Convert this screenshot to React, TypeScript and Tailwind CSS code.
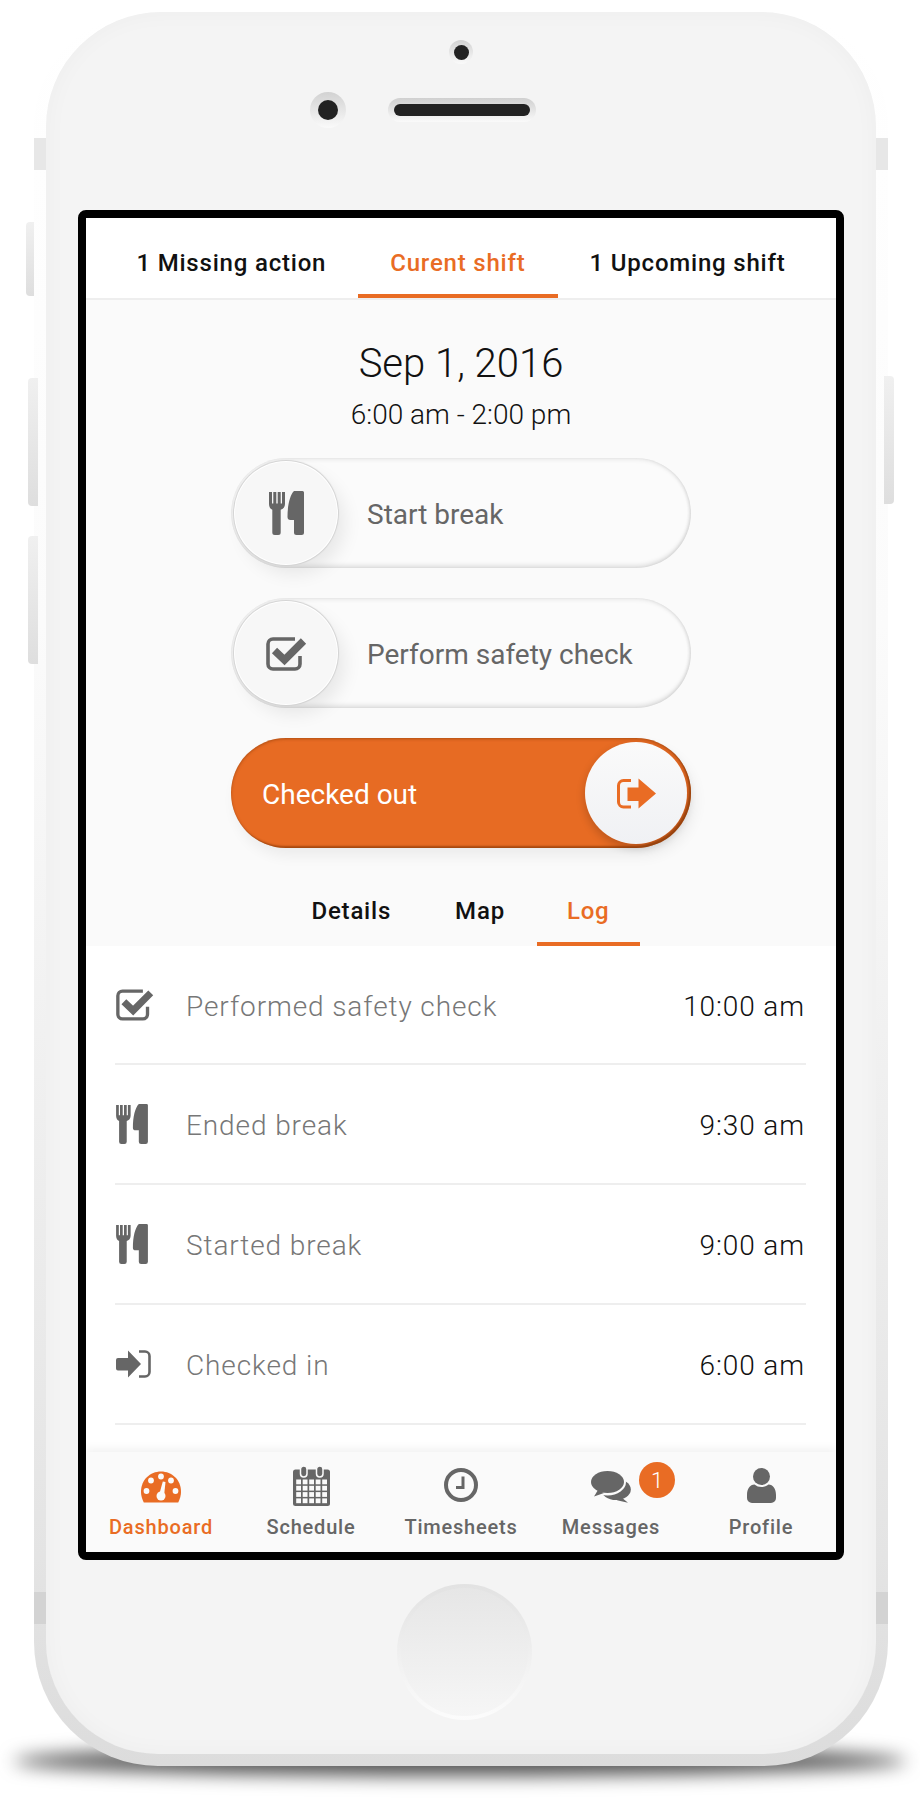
import type { ReactNode } from "react";

function CutleryIcon({ className }: { className?: string }) {
  return (
    <svg viewBox="0 0 35 44" className={className} fill="currentColor">
      <path d="M0 1h3v11.500h1.300V1h3v11.500h1.400V1h3v11.500H13V1h3v12c0 3-1.800 5-4.300 5.800V41.500a2.500 2.500 0 0 1-2.500 2.500H5.800a2.500 2.500 0 0 1-2.500-2.500V18.800C1.400 18 0 16 0 13z" />
      <path d="M33.500 0A1.500 1.500 0 0 1 35 1.500v40a2.500 2.500 0 0 1-2.500 2.500h-5a2.500 2.500 0 0 1-2.500-2.500V29h-3.500a3 3 0 0 1-3-3c0-12 2.500-22 6.500-26z" />
    </svg>
  );
}

function CheckIcon({ className }: { className?: string }) {
  return (
    <svg viewBox="0 0 41 35" className={className} fill="none" stroke="currentColor">
      <path d="M29 3H7a5 5 0 0 0-5 5v20a5 5 0 0 0 5 5h22a5 5 0 0 0 5-5v-8" strokeWidth="3.600" />
      <path d="M8.500 14.500l10 9.500L37.500 5" strokeWidth="7.500" />
    </svg>
  );
}

function SignOutIcon({ className }: { className?: string }) {
  return (
    <svg viewBox="0 0 39 31" className={className} fill="currentColor">
      <path d="M14 2.500H6.500a5 5 0 0 0-5 5V24a5 5 0 0 0 5 5H14" fill="none" stroke="currentColor" strokeWidth="3" />
      <path d="M21.500 0.500L39 15.500 21.500 30.500V23H10.500V9.500h11z" />
    </svg>
  );
}

function SignInIcon({ className }: { className?: string }) {
  return (
    <svg viewBox="0 0 35 28" className={className} fill="currentColor">
      <path d="M12 0.500L25 14 12 27.500V20.500H2a2 2 0 0 1-2-2V10a2 2 0 0 1 2-2h10z" />
      <path d="M23 1.500h6a4.500 4.500 0 0 1 4.500 4.500v16a4.500 4.500 0 0 1-4.500 4.500h-6" fill="none" stroke="currentColor" strokeWidth="2.600" />
    </svg>
  );
}

function GaugeIcon({ className }: { className?: string }) {
  return (
    <svg viewBox="0 0 40 32" className={className}>
      <path d="M2.800 31.500C1 28 0 24.500 0 20.500 0 9 9 .5 20 .5s20 8.500 20 20c0 4-1 7.500-2.800 11z" fill="#e96c24" />
      <g fill="#fafafa">
        <circle cx="10" cy="9.500" r="2.900" />
        <circle cx="20" cy="5.500" r="2.900" />
        <circle cx="30" cy="9.500" r="2.900" />
        <circle cx="5.500" cy="20" r="2.900" />
        <circle cx="34.500" cy="20" r="2.900" />
        <circle cx="20" cy="25" r="4.500" />
        <path d="M21.800 10.500l2.700.6-1.500 14-5-.8z" />
      </g>
    </svg>
  );
}

function CalendarIcon({ className }: { className?: string }) {
  const cols = [3.2, 9.7, 16.2, 22.7, 29.2];
  const rows = [13.5, 19.8, 26.1, 32.4];
  return (
    <svg viewBox="0 0 37 40" className={className}>
      <rect x="0" y="3.500" width="37" height="36.500" rx="2.500" fill="currentColor" />
      <rect x="7.500" y="0" width="6.500" height="11" rx="3.200" fill="currentColor" stroke="#fafafa" strokeWidth="1.500" />
      <rect x="23.500" y="0" width="6.500" height="11" rx="3.200" fill="currentColor" stroke="#fafafa" strokeWidth="1.500" />
      {rows.map((y) =>
        cols.map((x) => <rect key={`${x}-${y}`} x={x} y={y} width="4.800" height="4.800" fill="#fafafa" />)
      )}
    </svg>
  );
}

function ClockIcon({ className }: { className?: string }) {
  return (
    <svg viewBox="0 0 34 34" className={className} fill="none" stroke="currentColor">
      <circle cx="17" cy="17" r="15" strokeWidth="4" />
      <path d="M19 8.500V19.500H12" strokeWidth="3" />
    </svg>
  );
}

function CommentsIcon({ className }: { className?: string }) {
  return (
    <svg viewBox="0 0 40 32" className={className} fill="currentColor">
      <ellipse cx="25" cy="18.500" rx="14.800" ry="10.500" />
      <path d="M30 26l7 5.800-11-2.500z" />
      <ellipse cx="16.500" cy="11" rx="18.500" ry="13.500" fill="#fafafa" />
      <ellipse cx="16.500" cy="11" rx="16.500" ry="11" />
      <path d="M7 19L3 25.500l10-3.500z" />
    </svg>
  );
}

function ProfileIcon({ className }: { className?: string }) {
  return (
    <svg viewBox="0 0 29 35" className={className} fill="currentColor">
      <circle cx="14.500" cy="8.500" r="8.500" />
      <path d="M0 27C0 21 3 16.500 7.500 16.500c2 1.700 4.300 2.500 7 2.500s5-.8 7-2.500C26 16.500 29 21 29 27v3a5 5 0 0 1-5 5H5a5 5 0 0 1-5-5z" />
    </svg>
  );
}

function Tab({ label, active, className }: { label: string; active?: boolean; className?: string }) {
  return (
    <div
      className={`flex items-center border-b-4 text-[24px] font-medium tracking-[0.8px] ${className} ${
        active ? "border-[#e96c24] text-[#e96c24]" : "border-transparent text-[#111]"
      }`}
    >
      {label}
    </div>
  );
}

function ActionPill({ label, children }: { label: string; children: ReactNode }) {
  return (
    <div className="flex items-center h-[110px] w-[460px] rounded-full bg-[#fbfbfb] shadow-[inset_0_2px_4px_rgba(0,0,0,0.07),inset_0_-3px_4px_rgba(0,0,0,0.1),inset_-2px_0_3px_rgba(0,0,0,0.05)]">
      <div className="flex items-center justify-center ml-[4px] h-[102px] w-[102px] rounded-full bg-[#f7f7f7] text-[#666] shadow-[0_0_0_1px_#ffffff,0_0_1px_2px_#d2d2d2,8px_10px_18px_rgba(0,0,0,0.08)]">
        {children}
      </div>
      <span className="ml-[30px] pt-[3px] text-[28px] text-[#666]">{label}</span>
    </div>
  );
}

const logRows = [
  { label: "Performed safety check", time: "10:00 am", icon: <CheckIcon className="w-[38px] h-[33px]" /> },
  { label: "Ended break", time: "9:30 am", icon: <CutleryIcon className="w-[32px] h-[40px]" /> },
  { label: "Started break", time: "9:00 am", icon: <CutleryIcon className="w-[32px] h-[40px]" /> },
  { label: "Checked in", time: "6:00 am", icon: <SignInIcon className="w-[35px] h-[28px]" /> },
];

const navItems = [
  { label: "Dashboard", active: true, icon: <GaugeIcon className="w-[40px] h-[32px] mb-[3px]" /> },
  { label: "Schedule", icon: <CalendarIcon className="w-[37px] h-[40px]" /> },
  { label: "Timesheets", icon: <ClockIcon className="w-[34px] h-[34px] mb-[4px]" /> },
  { label: "Messages", icon: <CommentsIcon className="w-[40px] h-[32px] mb-[3px]" /> },
  { label: "Profile", icon: <ProfileIcon className="w-[29px] h-[35px] mb-[3px]" /> },
];

export default function App() {
  return (
    <div className="relative h-[1800px] w-[920px] overflow-hidden bg-white pl-[34px] pt-[12px] font-[Roboto,sans-serif]">
      {/* floor shadow */}
      <div className="absolute left-[14px] top-[1746px] h-[30px] w-[892px] rounded-[50%] bg-[#555] blur-[9px]" />

      {/* shell */}
      <div className="relative h-[1754px] w-[854px] rounded-t-[115px] rounded-b-[124px] bg-[linear-gradient(180deg,#ffffff_0%,#fbfbfb_35%,#e4e4e4_88%,#dcdcdc_100%)]">
        {/* side buttons and antenna bands */}
        <div className="absolute left-[-8px] top-[210px] h-[74px] w-[8px] rounded-l-[4px] bg-gradient-to-b from-[#f0f0f0] to-[#dedede]" />
        <div className="absolute left-[-6px] top-[366px] h-[128px] w-[10px] rounded-l-[4px] bg-gradient-to-b from-[#f0f0f0] to-[#dedede]" />
        <div className="absolute left-[-6px] top-[524px] h-[128px] w-[10px] rounded-l-[4px] bg-gradient-to-b from-[#f0f0f0] to-[#dedede]" />
        <div className="absolute left-[850px] top-[364px] h-[128px] w-[10px] rounded-r-[4px] bg-gradient-to-b from-[#f0f0f0] to-[#dedede]" />
        <div className="absolute left-0 top-[126px] h-[32px] w-[12px] bg-[#e7e7e7]" />
        <div className="absolute left-[842px] top-[126px] h-[32px] w-[12px] bg-[#e7e7e7]" />
        <div className="absolute left-0 top-[1580px] h-[32px] w-[12px] bg-[#d3d3d3]" />
        <div className="absolute left-[842px] top-[1580px] h-[32px] w-[12px] bg-[#d3d3d3]" />

        {/* body */}
        <div className="relative ml-[12px] flex h-[1742px] w-[830px] flex-col items-center rounded-t-[115px] rounded-b-[112px] bg-[#f4f4f4] shadow-[inset_0_0_24px_rgba(0,0,0,0.03)]">
          {/* earpiece area */}
          <div className="flex h-[198px] w-full flex-col items-center pt-[28px]">
            <div className="flex h-[24px] w-[24px] items-center justify-center rounded-full bg-gradient-to-b from-[#d2d2d2] to-[#fafafa]">
              <div className="h-[15px] w-[15px] rounded-full bg-[#222]" />
            </div>
            <div className="mt-[28px] flex w-full items-center gap-[42px] pl-[264px]">
              <div className="flex h-[36px] w-[36px] items-center justify-center rounded-full bg-gradient-to-b from-[#d2d2d2] to-[#fafafa]">
                <div className="h-[20px] w-[20px] rounded-full bg-[#222]" />
              </div>
              <div className="flex h-[24px] w-[148px] items-center justify-center rounded-full bg-gradient-to-b from-[#d0d0d0] to-[#fafafa]">
                <div className="h-[12px] w-[136px] rounded-full bg-[#222]" />
              </div>
            </div>
          </div>

          {/* screen */}
          <div className="h-[1350px] w-[766px] rounded-[8px] border-[8px] border-black">
            <div className="flex h-full w-full flex-col bg-white">
              <div className="flex h-[80px] shrink-0 justify-center bg-white">
                <Tab label="1 Missing action" className="px-[32px] pt-[14px]" />
                <Tab label="Curent shift" active className="px-[32px] pt-[14px]" />
                <Tab label="1 Upcoming shift" className="px-[32px] pt-[14px]" />
              </div>

              <div className="flex h-[648px] shrink-0 flex-col items-center border-t-2 border-[#eeeeee] bg-[#fafafa] pt-[40px]">
                <div className="text-[40px] font-light leading-[48px] text-[#111]">Sep 1, 2016</div>
                <div className="mt-[9px] text-[28px] font-light leading-[36px] text-[#111]">6:00 am - 2:00 pm</div>
                <div className="mt-[25px] flex flex-col gap-[30px]">
                  <ActionPill label="Start break">
                    <CutleryIcon className="h-[44px] w-[35px]" />
                  </ActionPill>
                  <ActionPill label="Perform safety check">
                    <CheckIcon className="h-[35px] w-[41px]" />
                  </ActionPill>
                  <div className="flex h-[110px] w-[460px] items-center justify-between rounded-full bg-[#e76b23] pl-[31px] pr-[4px] shadow-[inset_0_1px_3px_rgba(120,50,0,0.5),inset_-2px_-2px_2px_rgba(120,50,0,0.55),4px_8px_14px_rgba(0,0,0,0.06)]">
                    <span className="pt-[3px] text-[28px] text-white">Checked out</span>
                    <div className="flex h-[102px] w-[102px] items-center justify-center rounded-full bg-gradient-to-b from-[#fafafa] to-[#f0f1f4] text-[#e96c24] shadow-[0_4px_10px_rgba(0,0,0,0.2)]">
                      <SignOutIcon className="h-[31px] w-[39px]" />
                    </div>
                  </div>
                </div>
                <div className="mr-[3px] mt-auto flex h-[66px] justify-center">
                  <Tab label="Details" className="px-[32px]" />
                  <Tab label="Map" className="px-[32px]" />
                  <Tab label="Log" active className="px-[30px]" />
                </div>
              </div>

              {/* log */}
              <div className="flex-1 bg-white pl-[29px] pr-[30px]">
                {logRows.map((row, i) => (
                  <div
                    key={row.label}
                    className={`flex items-center border-b-2 border-[#eeeeee] ${i === 0 ? "h-[119px]" : "h-[120px]"}`}
                  >
                    <div className="ml-[1px] flex w-[70px] shrink-0 pb-[1px] text-[#666]">{row.icon}</div>
                    <span className="flex-1 pt-[4px] text-[28px] font-light tracking-[0.9px] text-[#777]">{row.label}</span>
                    <span className="mr-[1px] pt-[4px] text-[28px] font-light tracking-[0.9px] text-[#111]">{row.time}</span>
                  </div>
                ))}
              </div>

              {/* bottom nav */}
              <div className="relative grid h-[100px] shrink-0 grid-cols-5 bg-[#fafafa] shadow-[0_-4px_8px_rgba(0,0,0,0.05)]">
                {navItems.map((item) => (
                  <div
                    key={item.label}
                    className={`relative flex flex-col items-center pt-[12px] ${item.active ? "text-[#e96c24]" : "text-[#666]"}`}
                  >
                    <div className="flex h-[42px] items-end">{item.icon}</div>
                    <span className="mt-[9px] text-[20px] font-medium leading-[24px] tracking-[0.8px]">{item.label}</span>
                    {item.label === "Messages" && (
                      <span className="absolute left-[103px] top-[10px] flex h-[36px] w-[36px] items-center justify-center rounded-full bg-[#e96c24] text-[22px] font-light text-white">
                        1
                      </span>
                    )}
                  </div>
                ))}
              </div>
            </div>
          </div>

          {/* home button */}
          <div className="ml-[6px] mt-[24px] h-[136px] w-[135px] rounded-full bg-gradient-to-b from-[#e2e2e2] to-[#fcfcfc] p-[4px]">
            <div className="h-full w-full rounded-full bg-gradient-to-b from-[#e6e6e6] to-[#f6f6f6]" />
          </div>
        </div>
      </div>
    </div>
  );
}
